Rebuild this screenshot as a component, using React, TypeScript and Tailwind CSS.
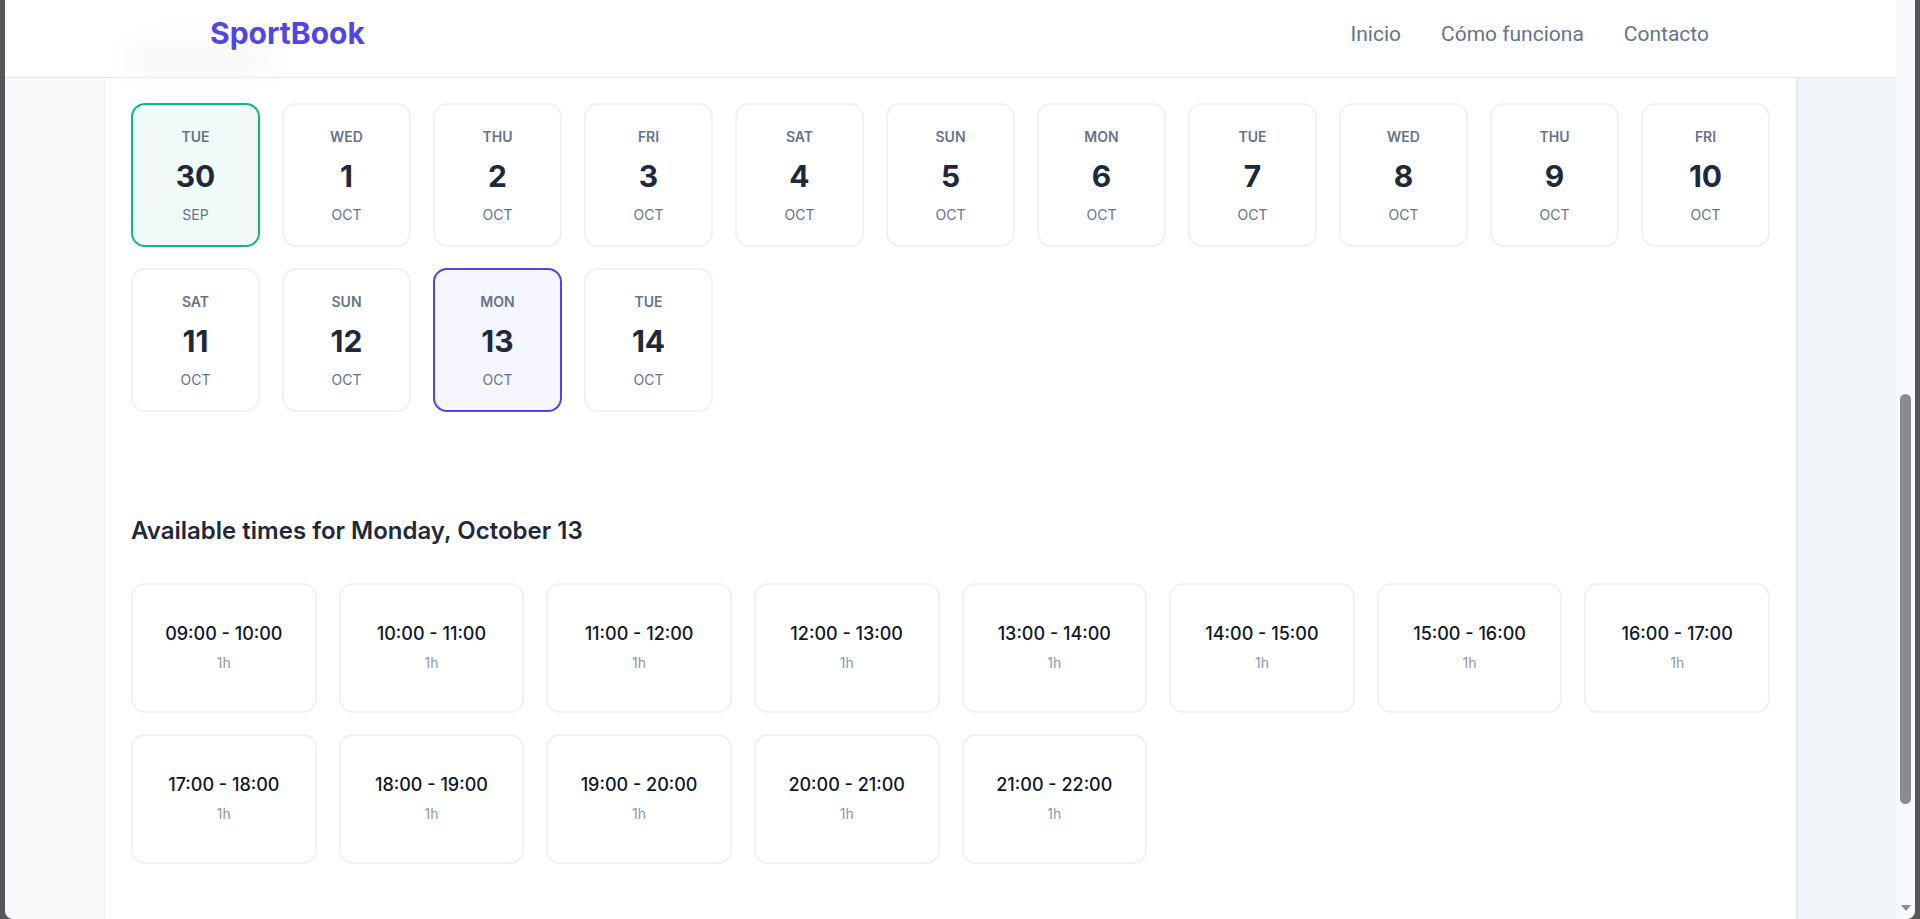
const days = [
  { dow: 'TUE', day: 30, month: 'SEP' },
  { dow: 'WED', day: 1, month: 'OCT' },
  { dow: 'THU', day: 2, month: 'OCT' },
  { dow: 'FRI', day: 3, month: 'OCT' },
  { dow: 'SAT', day: 4, month: 'OCT' },
  { dow: 'SUN', day: 5, month: 'OCT' },
  { dow: 'MON', day: 6, month: 'OCT' },
  { dow: 'TUE', day: 7, month: 'OCT' },
  { dow: 'WED', day: 8, month: 'OCT' },
  { dow: 'THU', day: 9, month: 'OCT' },
  { dow: 'FRI', day: 10, month: 'OCT' },
  { dow: 'SAT', day: 11, month: 'OCT' },
  { dow: 'SUN', day: 12, month: 'OCT' },
  { dow: 'MON', day: 13, month: 'OCT' },
  { dow: 'TUE', day: 14, month: 'OCT' },
];

const slots = [
  '09:00 - 10:00',
  '10:00 - 11:00',
  '11:00 - 12:00',
  '12:00 - 13:00',
  '13:00 - 14:00',
  '14:00 - 15:00',
  '15:00 - 16:00',
  '16:00 - 17:00',
  '17:00 - 18:00',
  '18:00 - 19:00',
  '19:00 - 20:00',
  '20:00 - 21:00',
  '21:00 - 22:00',
];

function DayCard({ dow, day, month, today, selected }: {
  dow: string;
  day: number;
  month: string;
  today?: boolean;
  selected?: boolean;
}) {
  let tone = 'border-[#eef1f6] bg-white';
  if (today) tone = 'border-[#10b981] bg-[#f0faf6]';
  if (selected) tone = 'border-[#4f46e5] bg-[#f5f5ff]';

  return (
    <button
      className={`flex h-[144px] flex-col items-center justify-center rounded-[14px] border-2 pt-[2px] ${tone}`}
    >
      <span className="text-[14px] leading-[20px] font-semibold text-[#64748b]">{dow}</span>
      <span className="mt-[11px] text-[30px] leading-[36px] font-bold text-[#1e293b]">{day}</span>
      <span className="mt-[11px] text-[14px] leading-[20px] text-[#64748b]">{month}</span>
    </button>
  );
}

function SlotCard({ label }: { label: string }) {
  return (
    <button className="flex h-[130px] flex-col items-center justify-center rounded-[14px] border-2 border-[#eef1f6] bg-white pb-[4px]">
      <span className="text-[18px] leading-[28px] font-medium text-[#0f172a]">{label}</span>
      <span className="mt-[5px] text-[14px] leading-[20px] text-[#8a98ad]">1h</span>
    </button>
  );
}

export default function App() {
  return (
    <div className="h-[919px] w-full overflow-hidden bg-[#55565b] px-[5px] font-['Inter',sans-serif]">
      <div className="flex h-full overflow-hidden rounded-b-[8px]">
        <div className="flex min-w-0 flex-1 flex-col bg-linear-to-r from-[#f8fafc] to-[#f0f4f8]">
          <header className="relative flex h-[78px] shrink-0 items-center justify-between border-b border-[#e5e7eb] bg-white pr-[187px] pb-[11px] pl-[205px]">
            <div className="pointer-events-none absolute top-[42px] left-[118px] h-[36px] w-[150px] rounded-full bg-[#f5f5f5]/60 blur-md" />
            <span className="relative text-[30px] font-bold text-[#4f46e5]">SportBook</span>
            <nav className="mt-[3px] flex items-center gap-10 font-['Roboto',sans-serif] text-[21px] text-[#64748b]">
              <a>Inicio</a>
              <a>Cómo funciona</a>
              <a>Contacto</a>
            </nav>
          </header>

          <main className="flex-1 px-[100px]">
            <div className="h-full bg-white px-[26px] pt-[25px] shadow-sm">
              <div className="grid grid-cols-11 gap-x-[22px] gap-y-[21px]">
                {days.map((d, i) => (
                  <DayCard key={i} {...d} today={i === 0} selected={i === 13} />
                ))}
              </div>

              <h2 className="mt-[103px] text-[24px] leading-[32px] font-semibold text-[#1e293b]">
                Available times for Monday, October 13
              </h2>

              <div className="mt-[36px] grid grid-cols-8 gap-x-[22px] gap-y-[21px]">
                {slots.map((s) => (
                  <SlotCard key={s} label={s} />
                ))}
              </div>
            </div>
          </main>
        </div>

        <div className="flex w-[19px] shrink-0 flex-col items-center bg-[#f9f9f9]">
          <div className="mt-[394px] h-[410px] w-[11px] rounded-full bg-[#8b8b8b]" />
          <svg className="mt-auto mb-[8px]" width="10" height="6" viewBox="0 0 10 6">
            <polygon points="0,0 10,0 5,6" fill="#8b8b8b" />
          </svg>
        </div>
      </div>
    </div>
  );
}
